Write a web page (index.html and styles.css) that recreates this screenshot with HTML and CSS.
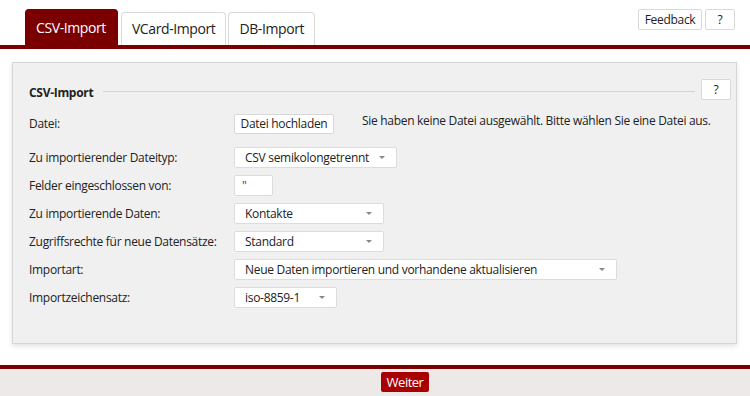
FILE: index.html
```html
<!DOCTYPE html>
<html lang="de">
<head>
    <meta charset="UTF-8">
    <title>CSV-Import</title>
    <link rel="stylesheet" href="styles.css">
</head>
<body>
    <div class="topbar">
        <div class="tabs">
            <div class="tab active">CSV-Import</div>
            <div class="tab">VCard-Import</div>
            <div class="tab">DB-Import</div>
        </div>
        <div class="top-actions">
            <button class="btn btn-feedback">Feedback</button>
            <button class="btn btn-help">?</button>
        </div>
    </div>

    <div class="main">
        <div class="panel">
            <div class="legend">
                <span class="legend-title">CSV-Import</span>
                <span class="legend-line"></span>
                <button class="btn btn-help">?</button>
            </div>

            <div class="form-row row-file">
                <div class="label">Datei:</div>
                <button class="btn btn-upload">Datei hochladen</button>
                <div class="file-note">Sie haben keine Datei ausgewählt. Bitte wählen Sie eine Datei aus.</div>
            </div>
            <div class="form-row">
                <div class="label">Zu importierender Dateityp:</div>
                <div class="select w-type">CSV semikolongetrennt</div>
            </div>
            <div class="form-row">
                <div class="label">Felder eingeschlossen von:</div>
                <div class="input w-quote">"</div>
            </div>
            <div class="form-row">
                <div class="label">Zu importierende Daten:</div>
                <div class="select w-data">Kontakte</div>
            </div>
            <div class="form-row">
                <div class="label">Zugriffsrechte für neue Datensätze:</div>
                <div class="select w-data">Standard</div>
            </div>
            <div class="form-row">
                <div class="label">Importart:</div>
                <div class="select w-mode">Neue Daten importieren und vorhandene aktualisieren</div>
            </div>
            <div class="form-row">
                <div class="label">Importzeichensatz:</div>
                <div class="select w-charset">iso-8859-1</div>
            </div>
        </div>
    </div>

    <div class="footer">
        <button class="btn-primary">Weiter</button>
    </div>
</body>
</html>
```

FILE: styles.css
```css
:root {
    --dark-red: #7a0000;
    --red: #a80000;
    --border: #d9d9d9;
    --panel: #f0f0f0;
    --text: #222;
}

* {
    margin: 0;
    padding: 0;
    box-sizing: border-box;
}

body {
    font-family: "Open Sans", "Noto Sans", sans-serif;
    font-size: 12px;
    letter-spacing: -0.3px;
    color: var(--text);
    background: #fff;
    height: 396px;
    display: flex;
    flex-direction: column;
    overflow: hidden;
}

button {
    font-family: inherit;
    letter-spacing: inherit;
    color: inherit;
}

/* top tabs */
.topbar {
    display: flex;
    justify-content: space-between;
    height: 49px;
    padding: 0 15px 0 25px;
    border-bottom: 4px solid var(--dark-red);
}

.tabs {
    display: flex;
    align-items: flex-end;
    gap: 2px;
}

.tab {
    font-size: 14px;
    letter-spacing: -0.4px;
    height: 33px;
    line-height: 32px;
    padding: 0 10px;
    background: #fff;
    border: 1px solid var(--border);
    border-bottom: none;
    border-radius: 4px 4px 0 0;
}

.tab.active {
    height: 36px;
    line-height: 36px;
    padding: 0 11px 0 10px;
    margin-right: 1px;
    background: var(--dark-red);
    border-color: var(--dark-red);
    color: #fff;
}

.top-actions {
    display: flex;
    gap: 3px;
    padding-top: 9px;
}

.btn {
    height: 21px;
    padding: 0 6px;
    background: #fff;
    border: 1px solid var(--border);
    border-radius: 2px;
    font-size: 12px;
}

.btn-feedback {
    width: 64px;
    padding: 0;
}

.btn-help {
    width: 30px;
}

/* panel */
.main {
    padding: 13px 13px 0 12px;
}

.panel {
    height: 282px;
    background: var(--panel);
    border: 1px solid #d6d6d6;
    box-shadow: 0 2px 5px rgba(0, 0, 0, 0.12);
    padding: 16px 5px 0 16px;
}

.legend {
    display: flex;
    align-items: center;
    height: 20px;
    margin-bottom: 14px;
}

.legend-title {
    font-weight: bold;
    font-size: 12px;
    margin-right: 10px;
    position: relative;
    top: 3px;
}

.legend-line {
    flex: 1;
    height: 1px;
    background: #d3d3d3;
    margin-right: 6px;
    position: relative;
    top: 2px;
}

.form-row {
    display: flex;
    align-items: center;
    height: 21px;
    margin-bottom: 7px;
}

.row-file {
    margin-bottom: 13px;
}

.label {
    width: 205px;
    flex-shrink: 0;
}

.btn-upload {
    width: 100px;
    height: 20px;
    padding: 0;
}

.file-note {
    margin-left: 28px;
    position: relative;
    top: -3px;
}

.select,
.input {
    height: 21px;
    line-height: 19px;
    background: #fff;
    border: 1px solid #dcdcdc;
    border-radius: 2px;
    padding: 0 10px;
    white-space: nowrap;
}

.select {
    position: relative;
    padding-right: 24px;
}

.select::after {
    content: "";
    position: absolute;
    right: 11px;
    top: 8px;
    border-left: 3px solid transparent;
    border-right: 3px solid transparent;
    border-top: 3px solid #888;
}

.w-type { width: 163px; }
.w-quote { width: 39px; padding: 0 7px; color: #5a2a6a; }
.w-data { width: 150px; }
.w-mode { width: 383px; }
.w-charset { width: 103px; }

/* bottom bar */
.footer {
    margin-top: auto;
    height: 31px;
    border-top: 4px solid var(--dark-red);
    background: #ede9e8;
    padding: 3px 0 0 60px;
    text-align: center;
}

.btn-primary {
    height: 20px;
    width: 48px;
    background: var(--red);
    border: none;
    border-radius: 2px;
    color: #fff;
    font-size: 13px;
    letter-spacing: -0.5px;
}
```
